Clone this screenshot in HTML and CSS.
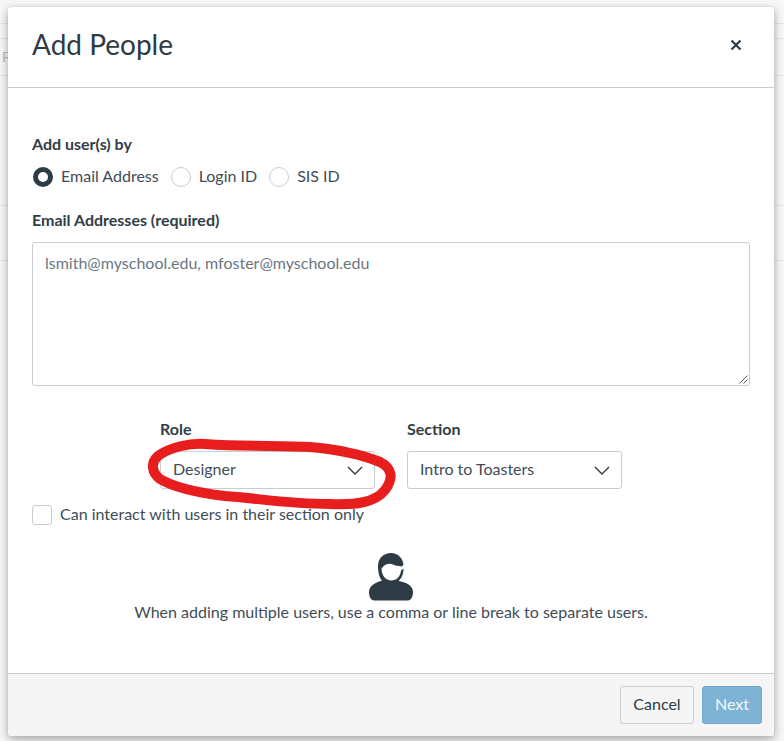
FILE: index.html
```html
<!DOCTYPE html>
<html lang="en">
<head>
<meta charset="utf-8">
<title>Add People</title>
<link rel="stylesheet" href="styles.css">
</head>
<body>
<div class="backdrop-line l1"></div>
<div class="backdrop-line l2"></div>
<div class="backdrop-line l3"></div>
<div class="backdrop-line l4"></div>
<div class="backdrop-line l5"></div>
<span class="backdrop-letter">F</span>
<div class="modal">
  <header class="modal-header">
    <h1 class="modal-title">Add People</h1>
    <svg class="close-icon" width="12" height="12" viewBox="0 0 12 12"><path d="M1.5 1.5 10.5 10.5M10.5 1.5 1.5 10.5" fill="none" stroke="#2d3b45" stroke-width="2.2"/></svg>
  </header>
  <main class="modal-body">
    <div class="label add-by">Add user(s) by</div>
    <div class="radio-row">
      <label class="radio-item"><span class="radio radio-on"></span><span class="lift">Email Address</span></label>
      <label class="radio-item"><span class="radio"></span><span class="lift">Login ID</span></label>
      <label class="radio-item"><span class="radio"></span><span class="lift">SIS ID</span></label>
    </div>
    <div class="label email-label">Email Addresses (required)</div>
    <div class="textarea">
      lsmith@myschool.edu, mfoster@myschool.edu
      <svg class="grip" width="9" height="9" viewBox="0 0 9 9"><path d="M8.5 .5 .5 8.500M8.500 4.500 4.500 8.500" fill="none" stroke="#555" stroke-width="1"/></svg>
    </div>
    <div class="select-row">
      <div class="field field-role">
        <div class="label">Role</div>
        <div class="select">Designer<svg class="chevron" width="16" height="9" viewBox="0 0 16 9"><path d="M1 1 8 8 15 1" fill="none" stroke="#2d3b45" stroke-width="1.4"/></svg></div>
      </div>
      <div class="field field-section">
        <div class="label">Section</div>
        <div class="select">Intro to Toasters<svg class="chevron" width="16" height="9" viewBox="0 0 16 9"><path d="M1 1 8 8 15 1" fill="none" stroke="#2d3b45" stroke-width="1.4"/></svg></div>
      </div>
    </div>
    <label class="check-row"><span class="checkbox"></span><span class="lift-small">Can interact with users in their section only</span></label>
    <div class="hint">
      <svg class="person" width="44" height="48" viewBox="0 0 44 48"><path fill="#2d3b45" d="M22 0C29 0 34 5 34.500 12L32.500 13.500C29 13 26 12.500 24 11.500 21 10 16.500 10 12.500 15.500 12.500 22 16.500 27.500 22.500 27.500 27.500 27.500 31.500 23.500 32 17.500L34.500 15.500C34.500 21 32.500 25.500 29.500 28 36 29 44 32 44 39 44 44 42 47 39 47.500L5 47.500C2 47 0 44 0 39 0 32 8 29 13 27.500 10.500 25 9 20 9 13 9 5 15 0 22 0Z"/></svg>
      <p class="hint-text">When adding multiple users, use a comma or line break to separate users.</p>
    </div>
  </main>
  <footer class="modal-footer">
    <button class="btn btn-cancel">Cancel</button>
    <button class="btn btn-next">Next</button>
  </footer>
</div>
<svg class="scribble" width="784" height="741" viewBox="0 0 784 741"><path d="M205 444C190 443 170 447 158 456 150 463 152 473 160 479 175 488 200 493 225 496 255 498 290 504 330 504 355 505 375 503 385 490 394 478 392 468 380 462 365 456 345 450 310 447 280 445 250 447 205 444Z" fill="none" stroke="#e81e1e" stroke-width="10" stroke-linejoin="round"/></svg>
</body>
</html>
```
FILE: styles.css
```css
* { box-sizing: border-box; }
html, body { margin: 0; height: 741px; overflow: hidden; }
body {
  position: relative;
  background: #f7f7f7;
  font-family: Lato, "Open Sans", sans-serif;
  color: #2d3b45;
}
.backdrop-line { position: absolute; left: 0; right: 0; height: 1px; background: #e6e6e6; }
.l1 { top: 23px; }
.l2 { top: 38px; }
.l3 { top: 75px; }
.l4 { top: 205px; }
.l5 { top: 260px; }
.backdrop-letter { position: absolute; left: 2px; top: 48px; font-size: 14px; color: #bbb; }
.modal {
  position: absolute;
  left: 8px;
  top: 7px;
  width: 766px;
  height: 729px;
  display: flex;
  flex-direction: column;
  background: #fff;
  border-radius: 3px;
  box-shadow: 0 0 1px #a9b2b8, 0 3px 10px rgba(0,0,0,.35);
}
.modal-header {
  height: 81px;
  flex: none;
  display: flex;
  align-items: center;
  justify-content: space-between;
  padding: 0 32px 6px 24px;
  border-bottom: 1px solid #c7cdd1;
}
.modal-title { margin: 0; font-size: 28px; font-weight: 400; line-height: 36px; }
.close-icon { display: block; margin-top: 2px; }
.modal-body { flex: 1; padding: 46px 24px 0; position: relative; }
.label { font-size: 16px; font-weight: 700; line-height: 20px; opacity: .98; }
.radio-row { display: flex; gap: 11px; margin-top: 12px; height: 22px; }
.radio-item { display: flex; align-items: center; gap: 8px; font-size: 16px; color: #3f4d57; }
.lift { margin-bottom: 4px; }
.lift-small { margin-bottom: 2px; }
.radio { width: 20px; height: 20px; border-radius: 50%; border: 1px solid #c7cdd1; background: #fff; margin-left: 1px; }
.radio-on { border: 5px solid #2d3b45; }
.email-label { margin-top: 22px; }
.textarea {
  position: relative;
  margin-top: 12px;
  height: 144px;
  padding: 10px 12px;
  border: 1px solid #c7cdd1;
  border-radius: 3px;
  font-size: 16px;
  line-height: 20px;
  color: #6b7780;
}
.grip { position: absolute; right: 1px; bottom: 1px; }
.select-row { display: flex; gap: 32px; margin: 33px 0 0 128px; }
.field-role { width: 215px; }
.field-section { width: 215px; }
.select {
  position: relative;
  display: flex;
  align-items: center;
  height: 38px;
  margin-top: 12px;
  padding: 0 12px 4px;
  border: 1px solid #c7cdd1;
  border-radius: 3px;
  font-size: 16px;
  color: #3f4d57;
}
.chevron { position: absolute; right: 11px; top: 14px; }
.check-row { display: flex; align-items: center; gap: 8px; margin-top: 15px; height: 21px; font-size: 16px; color: #3f4d57; }
.checkbox { width: 20px; height: 20px; border: 1px solid #c7cdd1; border-radius: 3px; background: #fff; }
.hint { display: flex; flex-direction: column; align-items: center; margin-top: 28px; }
.person { display: block; }
.hint-text { margin: 1px 0 0; font-size: 16px; line-height: 20px; color: #3f4d57; }
.modal-footer {
  height: 63px;
  flex: none;
  display: flex;
  justify-content: flex-end;
  align-items: center;
  gap: 8px;
  padding: 0 12px;
  background: #f5f5f5;
  border-top: 1px solid #c7cdd1;
  border-radius: 0 0 3px 3px;
}
.btn { height: 38px; border-radius: 3px; font: 16px Lato, "Open Sans", sans-serif; padding: 0 0 4px; }
.btn-cancel { width: 74px; background: #f5f5f5; border: 1px solid #c7cdd1; color: #2d3b45; }
.btn-next { width: 60px; background: #7fb3d5; border: 1px solid #73a9cc; color: #f4f9fc; }
.scribble { position: absolute; left: 0; top: 0; pointer-events: none; }
```
